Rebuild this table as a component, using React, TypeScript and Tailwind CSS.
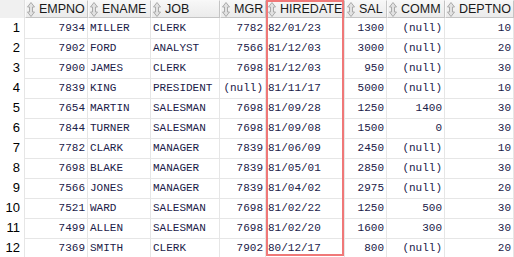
import React from "react";

const cols = [
  { name: "EMPNO", align: "right" },
  { name: "ENAME", align: "left" },
  { name: "JOB", align: "left" },
  { name: "MGR", align: "right" },
  { name: "HIREDATE", align: "left" },
  { name: "SAL", align: "right" },
  { name: "COMM", align: "right" },
  { name: "DEPTNO", align: "right" },
];

const rows: string[][] = [
  ["7934", "MILLER", "CLERK", "7782", "82/01/23", "1300", "(null)", "10"],
  ["7902", "FORD", "ANALYST", "7566", "81/12/03", "3000", "(null)", "20"],
  ["7900", "JAMES", "CLERK", "7698", "81/12/03", "950", "(null)", "30"],
  ["7839", "KING", "PRESIDENT", "(null)", "81/11/17", "5000", "(null)", "10"],
  ["7654", "MARTIN", "SALESMAN", "7698", "81/09/28", "1250", "1400", "30"],
  ["7844", "TURNER", "SALESMAN", "7698", "81/09/08", "1500", "0", "30"],
  ["7782", "CLARK", "MANAGER", "7839", "81/06/09", "2450", "(null)", "10"],
  ["7698", "BLAKE", "MANAGER", "7839", "81/05/01", "2850", "(null)", "30"],
  ["7566", "JONES", "MANAGER", "7839", "81/04/02", "2975", "(null)", "20"],
  ["7521", "WARD", "SALESMAN", "7698", "81/02/22", "1250", "500", "30"],
  ["7499", "ALLEN", "SALESMAN", "7698", "81/02/20", "1600", "300", "30"],
  ["7369", "SMITH", "CLERK", "7902", "80/12/17", "800", "(null)", "20"],
];

function SortIcon() {
  return (
    <svg width="8" height="15" viewBox="0 0 8 15" className="shrink-0">
      <path
        d="M4 0.5 L7.5 5 L5.5 5 L5.5 10 L7.5 10 L4 14.5 L0.5 10 L2.5 10 L2.5 5 L0.5 5 Z"
        fill="#e2e2e2"
        stroke="#aaaaaa"
        strokeWidth="1"
      />
    </svg>
  );
}

const grid =
  "grid grid-cols-[25px_63px_63px_69px_46px_79px_42px_58px_69px]";

export default function App() {
  return (
    <div className="relative w-[514px] h-[257px] overflow-hidden bg-white">
      <div className={`${grid} h-[18px] bg-[#f0f0f0]`}>
        <div className="border-r border-[#e0e0e0]" />
        {cols.map((c) => (
          <div
            key={c.name}
            className="flex items-center gap-[4px] pl-[1px] h-[18px] border border-[#c4c4c4] border-t-[#f8f8f8] border-l-[#fafafa] bg-[linear-gradient(#f7f7f7,#ebebeb)] font-['Liberation_Sans',sans-serif] text-[12.5px] text-[#1a1a1a] leading-none overflow-hidden whitespace-nowrap"
          >
            <SortIcon />
            <span>{c.name}</span>
          </div>
        ))}
      </div>
      {rows.map((r, i) => (
        <div key={i} className={`${grid} h-[20px]`}>
          <div className="flex items-center justify-end pr-[4px] border-r border-b border-[#e6e6e6] bg-white font-['Liberation_Sans',sans-serif] text-[13px] text-black">
            {i + 1}
          </div>
          {r.map((v, j) => (
            <div
              key={j}
              className={`flex items-center px-[2px] border-r border-b border-[#e6e6e6] font-['Liberation_Mono',monospace] text-[11px] text-[#1a2048] whitespace-nowrap overflow-hidden ${
                cols[j].align === "right" ? "justify-end" : "justify-start"
              }`}
            >
              {v}
            </div>
          ))}
        </div>
      ))}
      <div className="absolute left-[266px] top-0 w-[78px] h-[256px] border-2 border-[#f07878] pointer-events-none" />
    </div>
  );
}
